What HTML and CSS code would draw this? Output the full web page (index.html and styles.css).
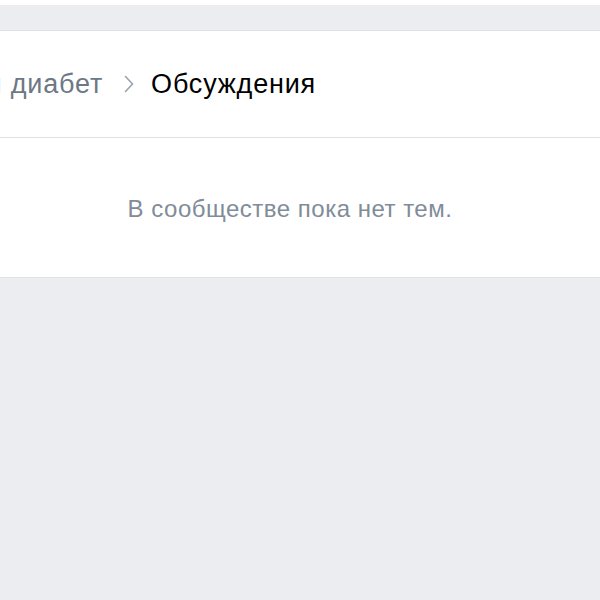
FILE: index.html
```html
<!DOCTYPE html>
<html lang="ru">
<head>
<meta charset="utf-8">
<title>Обсуждения</title>
<link rel="stylesheet" href="styles.css">
</head>
<body>
  <div class="topbar"></div>
  <main class="page">
    <section class="card">
      <header class="card-head">
        <nav class="crumbs">
          <span class="crumb">Сахарный диабет</span>
          <svg class="crumb-sep" width="10" height="18" viewBox="0 0 10 18" aria-hidden="true">
            <path d="M1.5 1.5 L8.5 9 L1.5 16.5" fill="none" stroke="#99a2ad" stroke-width="1.6" stroke-linecap="round" stroke-linejoin="round"/>
          </svg>
          <span class="crumb crumb-current">Обсуждения</span>
        </nav>
      </header>
      <div class="card-body">
        <p class="empty">В сообществе пока нет тем.</p>
      </div>
    </section>
  </main>
</body>
</html>
```
FILE: styles.css
```css
html, body {
  margin: 0;
  padding: 0;
}

body {
  background: #ebedf0;
  font-family: "Liberation Sans", Arial, sans-serif;
  overflow: hidden;
}

.topbar {
  height: 5px;
  background: #ffffff;
}

.page {
  padding-top: 25px;
}

.card {
  margin-left: -20px;
  width: 620px;
  background: #ffffff;
  border-top: 1px solid #dfe2e6;
  border-bottom: 1px solid #dfe2e6;
}

.card-head {
  height: 106px;
  border-bottom: 1px solid #dfe2e6;
  display: flex;
  align-items: center;
  justify-content: flex-end;
}

.crumbs {
  display: flex;
  align-items: center;
  margin-right: 284px;
  font-size: 27px;
  line-height: 32px;
  letter-spacing: 0.8px;
}

.crumb {
  color: #6d7885;
  white-space: nowrap;
}

.crumb-current {
  color: #000000;
}

.crumb-sep {
  display: block;
  margin: 0 17px 0 21px;
}

.card-body {
  height: 139px;
  display: flex;
  align-items: center;
  justify-content: center;
  padding-top: 2px;
  box-sizing: border-box;
}

.empty {
  margin: 0;
  font-size: 24px;
  letter-spacing: 0.5px;
  color: #818c99;
}
```
